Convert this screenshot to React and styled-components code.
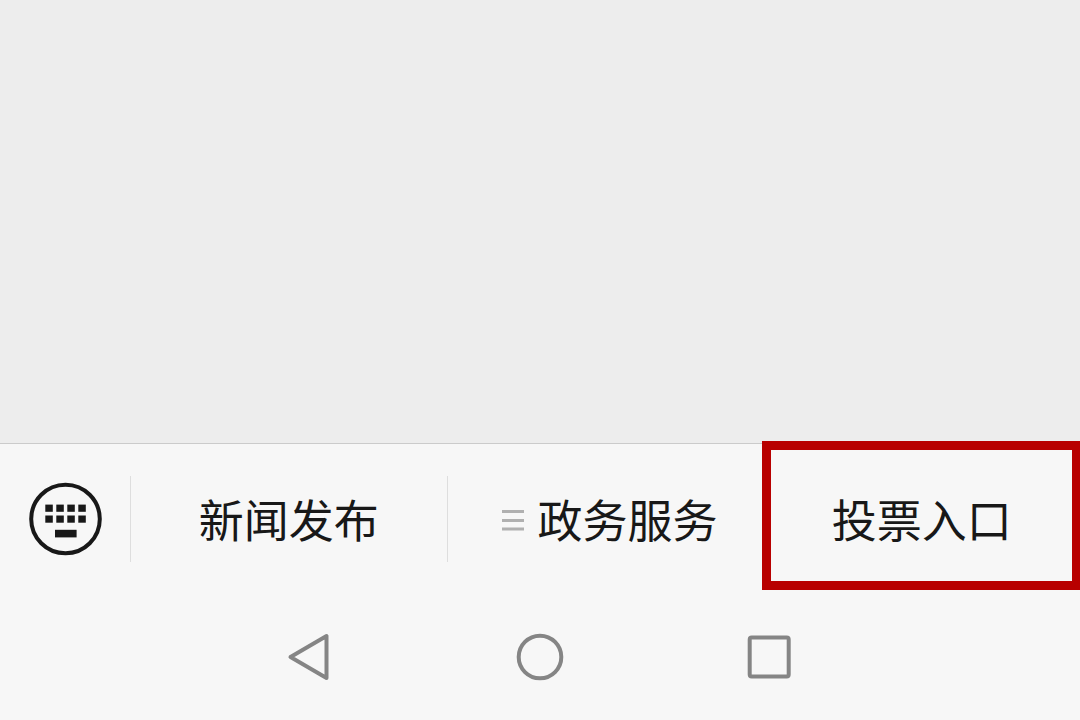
import React from "react";
import styled, { createGlobalStyle } from "styled-components";

const GlobalStyle = createGlobalStyle`
  * { box-sizing: border-box; }
  body {
    margin: 0;
    background: #f7f7f7;
    font-family: "Noto Sans CJK SC", "Noto Sans", sans-serif;
  }
`;

const Screen = styled.div`
  display: flex;
  flex-direction: column;
  min-height: 100vh;
  overflow: hidden;
`;

const Conversation = styled.main`
  flex: 1;
  background: #ededed;
`;

const MenuBar = styled.nav`
  display: flex;
  align-items: stretch;
  height: 151px;
  border-top: 1px solid #cbcbcb;
  background: #f7f7f7;
`;

const BareButton = styled.button`
  display: flex;
  align-items: center;
  justify-content: center;
  margin: 0;
  padding: 0;
  border: 0;
  background: transparent;
  color: inherit;
  font: inherit;
  cursor: pointer;
`;

const KeyboardToggle = styled(BareButton)`
  flex: 0 0 130px;
`;

const MenuCell = styled.div`
  position: relative;
  flex: 1;
  display: flex;
  align-items: center;
`;

const MenuButton = styled(BareButton)`
  flex: 1;
  gap: 14px;
  height: 86px;
  padding-left: ${(p) => (p.$submenu ? "8px" : "0")};
  border-left: ${(p) => (p.$divided ? "1px solid #dedede" : "0")};
  color: #181818;
  font-size: 45px;
  font-weight: 400;
  line-height: 64px;
  white-space: nowrap;
`;

const Highlight = styled.span`
  position: absolute;
  top: -3px;
  bottom: 4px;
  left: -1px;
  right: 0;
  border: 9px solid #b80000;
  border-right-width: 8px;
  pointer-events: none;
`;

const SystemBar = styled.footer`
  display: flex;
  justify-content: center;
  height: 126px;
  background: #f7f7f7;
`;

const SystemButton = styled(BareButton)`
  width: 230px;
`;

const KEY_COLUMNS = [17, 28, 39, 50];

function KeyboardIcon() {
  return (
    <svg width="74" height="74" viewBox="0 0 74 74" fill="#181818" aria-hidden="true">
      <circle cx="37.5" cy="37" r="34.3" fill="none" stroke="#181818" strokeWidth="4" />
      {KEY_COLUMNS.map((x) => (
        <React.Fragment key={x}>
          <rect x={x + 0.3} y="22.6" width="7.5" height="7.2" />
          <rect x={x + 0.3} y="33.5" width="7.5" height="7.2" />
        </React.Fragment>
      ))}
      <rect x="27" y="47.8" width="21.6" height="7.6" />
    </svg>
  );
}

function SubmenuIcon() {
  return (
    <svg width="22" height="24" viewBox="0 0 22 24" fill="#b0b0b0" aria-hidden="true">
      <rect y="3" width="22" height="3" />
      <rect y="12" width="22" height="3" />
      <rect y="20.5" width="22" height="3" />
    </svg>
  );
}

function SystemIcon({ children }) {
  return (
    <svg
      width="50"
      height="50"
      viewBox="0 0 50 50"
      fill="none"
      stroke="#858585"
      strokeWidth="4"
      strokeLinejoin="round"
      aria-hidden="true"
    >
      {children}
    </svg>
  );
}

export default function App() {
  return (
    <Screen>
      <GlobalStyle />
      <Conversation />
      <MenuBar>
        <KeyboardToggle type="button" aria-label="键盘">
          <KeyboardIcon />
        </KeyboardToggle>
        <MenuCell>
          <MenuButton type="button" $divided>新闻发布</MenuButton>
        </MenuCell>
        <MenuCell>
          <MenuButton type="button" $divided $submenu>
            <SubmenuIcon />
            政务服务
          </MenuButton>
        </MenuCell>
        <MenuCell>
          <MenuButton type="button">投票入口</MenuButton>
          <Highlight />
        </MenuCell>
      </MenuBar>
      <SystemBar>
        <SystemButton type="button" aria-label="返回">
          <SystemIcon>
            <path d="M5.5 25 L41.5 4 V46 Z" />
          </SystemIcon>
        </SystemButton>
        <SystemButton type="button" aria-label="主屏幕">
          <SystemIcon>
            <circle cx="25" cy="25" r="21.3" />
          </SystemIcon>
        </SystemButton>
        <SystemButton type="button" aria-label="最近任务">
          <SystemIcon>
            <rect x="4.7" y="5.5" width="39" height="39" rx="2" />
          </SystemIcon>
        </SystemButton>
      </SystemBar>
    </Screen>
  );
}
